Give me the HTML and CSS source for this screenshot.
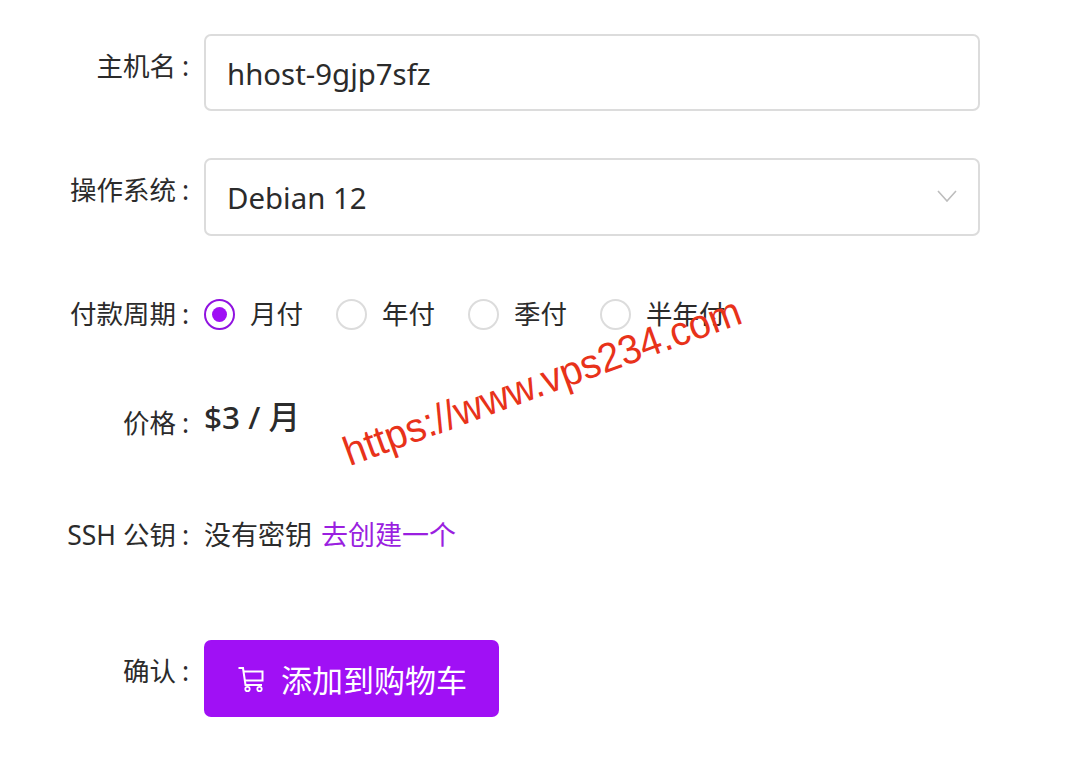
FILE: index.html
```html
<!DOCTYPE html>
<html lang="zh-CN">
<head>
    <meta charset="UTF-8">
    <title>添加到购物车</title>
    <link rel="stylesheet" href="styles.css">
</head>
<body>
    <form class="order-form">
        <!-- Hostname -->
        <div class="form-row row-host">
            <label class="form-label label-top">主机名<span class="colon">:</span></label>
            <div class="text-box">hhost-9gjp7sfz</div>
        </div>

        <!-- OS -->
        <div class="form-row row-os">
            <label class="form-label label-top">操作系统<span class="colon">:</span></label>
            <div class="text-box select-box">
                <span>Debian 12</span>
                <svg class="chevron" viewBox="0 0 20 12" width="20" height="12">
                    <path d="M1 1 L10 11 L19 1" fill="none" stroke="#bdbdbd" stroke-width="1.6"/>
                </svg>
            </div>
        </div>

        <!-- Billing period -->
        <div class="form-row row-period">
            <label class="form-label">付款周期<span class="colon">:</span></label>
            <div class="radio-group">
                <div class="radio-item"><span class="radio checked"></span>月付</div>
                <div class="radio-item"><span class="radio"></span>年付</div>
                <div class="radio-item"><span class="radio"></span>季付</div>
                <div class="radio-item"><span class="radio"></span>半年付</div>
            </div>
        </div>

        <!-- Price -->
        <div class="form-row row-price">
            <label class="form-label label-price">价格<span class="colon">:</span></label>
            <div class="price">$3 / 月</div>
        </div>

        <!-- SSH key -->
        <div class="form-row row-ssh">
            <label class="form-label">SSH 公钥<span class="colon">:</span></label>
            <div class="ssh-text">没有密钥 <a class="link" href="#">去创建一个</a></div>
        </div>

        <!-- Confirm -->
        <div class="form-row row-confirm">
            <label class="form-label label-confirm">确认<span class="colon">:</span></label>
            <button type="button" class="cart-button">
                <svg class="cart-icon" viewBox="0 0 28 28" width="28" height="28">
                    <path d="M1.5 3 H6 L8.5 20 H25" fill="none" stroke="#fff" stroke-width="2"/>
                    <path d="M6.4 6.5 H25.5 V15.5 H7.8" fill="none" stroke="#fff" stroke-width="2"/>
                    <circle cx="10.5" cy="24" r="2.2" fill="none" stroke="#fff" stroke-width="1.8"/>
                    <circle cx="22.5" cy="24" r="2.2" fill="none" stroke="#fff" stroke-width="1.8"/>
                </svg>
                添加到购物车
            </button>
        </div>
    </form>

    <div class="watermark">https://www.vps234.com</div>
</body>
</html>
```

FILE: styles.css
```css
body {
    margin: 0;
    background: #fff;
    color: #2b2b2b;
    font-family: "Noto Sans", "Noto Sans CJK SC", sans-serif;
    font-size: 26.5px;
    width: 1080px;
    height: 765px;
    overflow: hidden;
    position: relative;
}
.order-form {
    padding-top: 34px;
    width: 980px;
}
.form-row {
    display: flex;
    align-items: center;
}
.form-label {
    width: 189px;
    margin-right: 15px;
    text-align: right;
    flex-shrink: 0;
    white-space: nowrap;
    line-height: 32px;
    font-size: 26.5px;
}
.colon {
    margin-left: 6px;
}
.label-top {
    align-self: flex-start;
    padding-top: 16px;
}
.row-host {
    height: 77px;
}
.row-os {
    height: 78px;
    margin-top: 47px;
}
.row-period {
    height: 32px;
    margin-top: 62px;
}
.row-price {
    height: 36px;
    margin-top: 70px;
}
.label-price {
    padding-top: 10px;
}
.row-ssh {
    height: 32px;
    margin-top: 83px;
}
.row-confirm {
    height: 77px;
    margin-top: 89px;
}
.label-confirm {
    align-self: flex-start;
    padding-top: 15px;
}
.text-box {
    flex: 1;
    height: 100%;
    box-sizing: border-box;
    border: 2px solid #dcdcdc;
    border-radius: 7px;
    padding: 2px 21px 0;
    font-size: 29.4px;
    display: flex;
    align-items: center;
}
.select-box {
    justify-content: space-between;
    padding-right: 21px;
}
.chevron {
    margin-top: -5px;
}
.radio-group {
    display: flex;
    gap: 33px;
}
.radio-item {
    display: flex;
    align-items: center;
    gap: 15px;
    line-height: 32px;
}
.radio {
    box-sizing: border-box;
    width: 31px;
    height: 31px;
    border: 2px solid #dcdcdc;
    border-radius: 50%;
    display: flex;
    align-items: center;
    justify-content: center;
}
.radio.checked {
    border-color: #9013e0;
}
.radio.checked::after {
    content: "";
    width: 15px;
    height: 15px;
    border-radius: 50%;
    background: #a010f5;
}
.price {
    font-size: 31.5px;
    font-weight: 500;
    margin-top: -6px;
}
.ssh-text {
    font-size: 27px;
    line-height: 32px;
}
.link {
    margin-left: 2px;
    color: #9a1fe0;
    text-decoration: none;
}
.cart-button {
    display: flex;
    align-items: center;
    gap: 16px;
    height: 77px;
    width: 295px;
    padding: 0 0 0 33px;
    border: none;
    border-radius: 7px;
    background: #a010f5;
    color: #fff;
    font-family: inherit;
    font-size: 31px;
}
.cart-icon {
    flex-shrink: 0;
}
.watermark {
    position: absolute;
    left: 345px;
    top: 430px;
    color: #e8321a;
    font-family: "Liberation Sans", sans-serif;
    font-size: 41px;
    white-space: nowrap;
    transform-origin: left center;
    transform: rotate(-20deg) scaleX(0.95);
}
```
